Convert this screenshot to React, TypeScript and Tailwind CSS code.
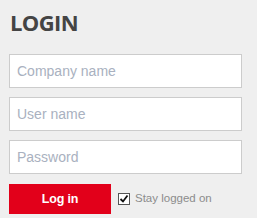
import React, { useState } from 'react';

export default function App() {
  const [stay, setStay] = useState(true);

  return (
    <div className="w-[257px] h-[218px] bg-[#efefef] pl-[9px] pr-[15px] pt-[7px]" style={{ fontFamily: '"Open Sans", "Liberation Sans", sans-serif' }}>
      <h1 className="text-[22px] leading-[30px] font-bold text-[#444444] tracking-[-0.6px] pl-[1px]">LOGIN</h1>
      <form className="mt-[17px] flex flex-col gap-[9px]" onSubmit={e => e.preventDefault()}>
        {['Company name', 'User name', 'Password'].map(p => (
          <input
            key={p}
            type={p === 'Password' ? 'password' : 'text'}
            placeholder={p}
            className="h-[34px] w-full bg-white border border-[#cccccc] px-[7px] text-[14px] text-[#333] placeholder:text-[#a9b1c0] outline-none"
            style={{ fontFamily: '"Liberation Sans", sans-serif' }}
          />
        ))}
        <div className="flex items-center mt-[1px]">
          <button className="w-[102px] h-[30px] bg-[#e2001a] text-white text-[12.5px] font-bold tracking-[-0.2px]" style={{ fontFamily: '"Liberation Sans", sans-serif' }}>Log in</button>
          <label className="flex items-center ml-[7px] text-[11.5px] text-[#8c8c8c] gap-[5px] cursor-pointer" style={{ fontFamily: '"Liberation Sans", sans-serif' }}>
            <span
              onClick={() => setStay(!stay)}
              className="w-[12px] h-[12px] bg-white border border-[#555] flex items-center justify-center"
            >
              {stay && (
                <svg width="10" height="10" viewBox="0 0 10 10">
                  <path d="M1.5 5 L4 7.5 L8.5 1.5" fill="none" stroke="#111" strokeWidth="1.8" />
                </svg>
              )}
            </span>
            Stay logged on
          </label>
        </div>
      </form>
    </div>
  );
}
